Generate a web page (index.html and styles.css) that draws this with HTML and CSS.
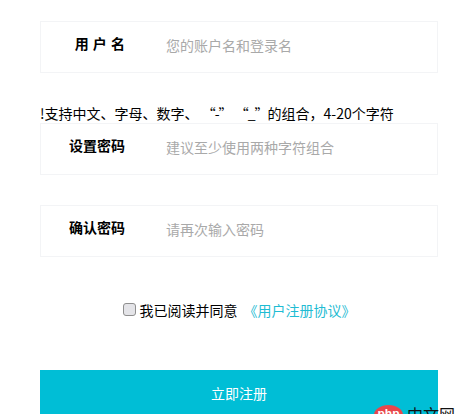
FILE: index.html
```html
<!DOCTYPE html>
<html lang="zh">
<head>
<meta charset="utf-8">
<title>用户注册</title>
<link rel="stylesheet" href="styles.css">
</head>
<body>
<form class="form">
  <div class="field">
    <label class="label label-spaced">用 户 名</label>
    <span class="placeholder">您的账户名和登录名</span>
  </div>
  <p class="tip">!支持中文、字母、数字、 <span class="quote">“-”</span> <span class="quote">“_”</span>的组合，4-20个字符</p>
  <div class="field">
    <label class="label">设置密码</label>
    <span class="placeholder">建议至少使用两种字符组合</span>
  </div>
  <div class="field field-gap">
    <label class="label">确认密码</label>
    <span class="placeholder">请再次输入密码</span>
  </div>
  <div class="agree">
    <input class="check" type="checkbox">
    <span>我已阅读并同意</span>
    <a class="link">《用户注册协议》</a>
  </div>
  <div class="submit">立即注册</div>
</form>
<div class="watermark">
  <span class="wm-logo">php</span><span class="wm-text">中文网</span>
</div>
</body>
</html>
```
FILE: styles.css
```css
html, body {
  margin: 0;
  height: 414px;
  overflow: hidden;
  background: #fff;
}
body {
  font-family: "Noto Sans CJK SC", "Liberation Sans", sans-serif;
  font-size: 14px;
  color: #000;
}
.form {
  width: 398px;
  margin-left: 40px;
  padding-top: 21px;
}
.field {
  box-sizing: border-box;
  height: 52px;
  border: 1px solid #f3f4f6;
  display: flex;
  align-items: center;
}
.field-gap {
  margin-top: 30px;
}
.label {
  width: 84px;
  text-align: right;
  font-weight: 700;
  line-height: 20px;
  margin-top: -8px;
  flex: none;
}
.label-spaced {
  word-spacing: 1px;
}
.placeholder {
  margin-left: 41px;
  color: #a9a9a9;
  line-height: 20px;
  margin-top: -4px;
}
.tip {
  margin: 30px 0 0;
  height: 20px;
  line-height: 20px;
  white-space: pre;
}
.quote {
  letter-spacing: -1px;
}
.agree {
  height: 20px;
  line-height: 20px;
  margin-top: 43px;
  display: flex;
  align-items: center;
  justify-content: center;
}
.check {
  appearance: none;
  box-sizing: border-box;
  width: 13px;
  height: 13px;
  margin: 0 4px 1px 0;
  background: #e4e4e8;
  border: 1px solid #8f8f8f;
  border-radius: 3px;
}
.link {
  color: #1fbcd3;
  margin-left: 6px;
}
.submit {
  margin-top: 50px;
  height: 44px;
  box-sizing: border-box;
  background: #00bed6;
  color: #fff;
  font-size: 14px;
  line-height: 46px;
  text-align: center;
}
.watermark {
  position: absolute;
  left: 374px;
  top: 405px;
  display: flex;
  align-items: flex-start;
  white-space: nowrap;
}
.wm-logo {
  width: 29px;
  height: 20px;
  border-radius: 50%;
  background: #e8474c;
  color: #fff;
  font: 700 12px/18px "Liberation Sans", sans-serif;
  text-align: center;
}
.wm-text {
  margin-left: 4px;
  font-size: 16px;
  line-height: 18px;
  color: #111;
}
```
